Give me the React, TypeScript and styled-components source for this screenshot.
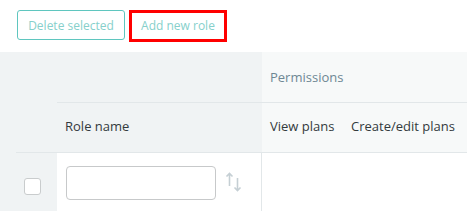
import React from 'react';
import styled, { createGlobalStyle } from 'styled-components';

const GlobalStyle = createGlobalStyle`
    body {
        margin: 0;
        background: #fff;
        font-family: 'Open Sans', 'Liberation Sans', sans-serif;
        font-size: 13px;
    }
`;

const colors = {
    teal: '#5fc6bf',
    tealText: '#86d0cb',
    headerBg: '#f0f3f4',
    permBg: '#f7f9f9',
    line: '#e2e7e9',
    text: '#333a3d',
    muted: '#6e8794',
};

export default function App() {
    return (
        <>
            <GlobalStyle />
            <Page>
                <Toolbar>
                    <OutlineButton>Delete selected</OutlineButton>
                    <LinkButton>Add new role</LinkButton>
                </Toolbar>
                <Table>
                    <SelectCell />
                    <HeadCell />
                    <GroupCell>Permissions</GroupCell>
                    <HeadCell bordered>Role name</HeadCell>
                    <HeadCell bordered light>View plans</HeadCell>
                    <HeadCell bordered light>Create/edit plans</HeadCell>
                    <CheckCell>
                        <Checkbox type="checkbox" />
                    </CheckCell>
                    <NameCell>
                        <NameInput />
                        <SortIcon width="17" height="20" viewBox="0 0 17 20">
                            <path d="M4.5 14V1.5M1.5 4.5l3-3 3 3" />
                            <path d="M12.5 6v12.5M9.5 15.5l3 3 3-3" />
                        </SortIcon>
                    </NameCell>
                    <BodyCell />
                </Table>
            </Page>
        </>
    );
}

const Page = styled.div`
    width: 467px;
    height: 211px;
    overflow: hidden;
`;

const Toolbar = styled.div`
    display: flex;
    align-items: flex-start;
    gap: 4px;
    height: 52px;
    padding: 10px 17px 0;
    box-sizing: border-box;
`;

const OutlineButton = styled.button`
    height: 30px;
    width: 108px;
    padding: 0;
    border: 1px solid ${colors.teal};
    border-radius: 3px;
    background: #fff;
    color: ${colors.tealText};
    font-family: inherit;
    font-size: 12px;
`;

const LinkButton = styled.button`
    height: 32px;
    width: 98px;
    padding: 0 0 2px;
    border: 3px solid #f00;
    background: #fff;
    color: ${colors.tealText};
    font-family: inherit;
    font-size: 12px;
`;

const Table = styled.div`
    display: grid;
    grid-template-columns: 57px 205px 81px 1fr;
    grid-template-rows: 50px 50px 59px;
`;

const SelectCell = styled.div`
    grid-row: 1 / 3;
    background: ${colors.headerBg};
`;

interface HeadProps {
    bordered?: boolean;
    light?: boolean;
}

const HeadCell = styled.div<HeadProps>`
    display: flex;
    align-items: center;
    padding-left: 8px;
    padding-bottom: 3px;
    background: ${(p) => (p.light ? colors.permBg : colors.headerBg)};
    border-top: ${(p) => (p.bordered ? `1px solid ${colors.line}` : 'none')};
    color: ${colors.text};
    white-space: nowrap;
`;

const GroupCell = styled(HeadCell)`
    grid-column: 3 / 5;
    background: ${colors.permBg};
    color: ${colors.muted};
    padding-top: 2px;
`;

const CheckCell = styled.div`
    display: flex;
    align-items: flex-start;
    padding: 26px 0 0 24px;
    background-color: ${colors.headerBg};
    background-image: linear-gradient(${colors.line}, ${colors.line});
    background-size: calc(100% - 16px) 1px;
    background-position: 16px 0;
    background-repeat: no-repeat;
`;

const Checkbox = styled.input`
    appearance: none;
    margin: 0;
    width: 17px;
    height: 17px;
    border: 1px solid #c9cccd;
    border-radius: 3px;
    background: #fff;
`;

const NameCell = styled.div`
    display: flex;
    align-items: flex-start;
    gap: 9px;
    padding: 13px 0 0 9px;
    border-top: 1px solid ${colors.line};
    border-right: 1px solid ${colors.line};
`;

const NameInput = styled.input`
    width: 150px;
    height: 34px;
    box-sizing: border-box;
    border: 1px solid #c7c9ca;
    border-radius: 4px;
    margin: 0;
`;

const SortIcon = styled.svg`
    fill: none;
    stroke: #c5cfd4;
    stroke-width: 1.6;
    margin-top: 6px;
`;

const BodyCell = styled.div`
    grid-column: 3 / 5;
    border-top: 1px solid ${colors.line};
`;
